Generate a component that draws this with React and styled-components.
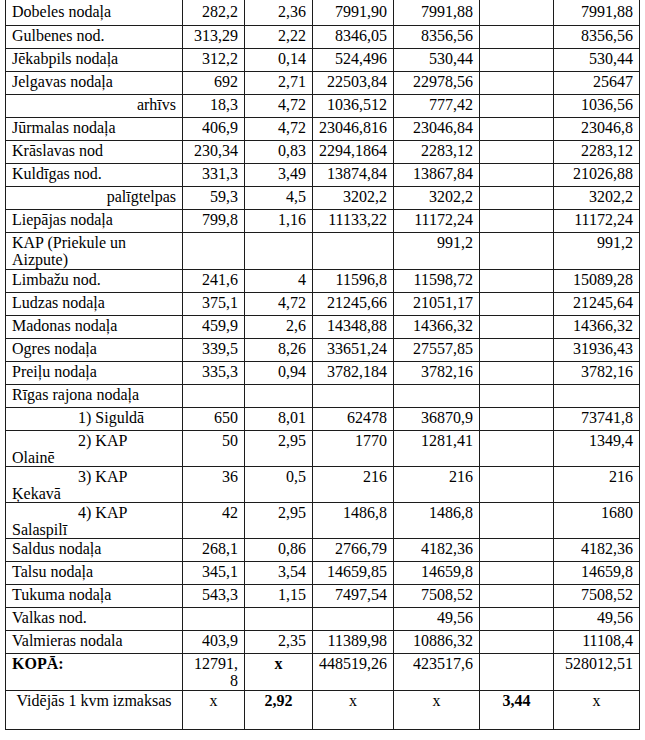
import React from 'react';
import styled, { createGlobalStyle } from 'styled-components';

const GlobalStyle = createGlobalStyle`
  html, body {
    margin: 0;
    padding: 0;
    background: #fff;
  }
`;

const Page = styled.div`
  width: 645px;
  height: 740px;
  overflow: hidden;
  padding-left: 5px;
  box-sizing: border-box;
  background: #fff;
`;

const Sheet = styled.table`
  width: 634px;
  table-layout: fixed;
  border-collapse: collapse;
  font-family: "Liberation Serif", "Times New Roman", serif;
  font-size: 16px;
  line-height: 17px;
  color: #000;
`;

const Col = styled.col`
  width: ${p => p.$w}px;
`;

const Row = styled.tr`
  height: ${p => p.$h || 23}px;
`;

const Cell = styled.td`
  border: 1px solid #1c1c1c;
  border-top: ${p => (p.$first ? 'none' : '1px solid #1c1c1c')};
  padding: ${p => (p.$first ? 3 : 1)}px 6px 0 6px;
  vertical-align: top;
  text-align: ${p => p.$align || 'right'};
  font-weight: ${p => (p.$bold ? 700 : 400)};
  text-indent: ${p => p.$indent || 0}px;
  white-space: nowrap;
  overflow: hidden;
`;

const widths = [177, 62, 68, 81, 86, 74, 86];

const rows = [
  { name: 'Dobeles nodaļa', v: ['282,2', '2,36', '7991,90', '7991,88', '', '7991,88'], h: 25, first: true },
  { name: 'Gulbenes nod.', v: ['313,29', '2,22', '8346,05', '8356,56', '', '8356,56'] },
  { name: 'Jēkabpils nodaļa', v: ['312,2', '0,14', '524,496', '530,44', '', '530,44'] },
  { name: 'Jelgavas nodaļa', v: ['692', '2,71', '22503,84', '22978,56', '', '25647'] },
  { name: 'arhīvs', align: 'right', v: ['18,3', '4,72', '1036,512', '777,42', '', '1036,56'] },
  { name: 'Jūrmalas nodaļa', v: ['406,9', '4,72', '23046,816', '23046,84', '', '23046,8'] },
  { name: 'Krāslavas nod', v: ['230,34', '0,83', '2294,1864', '2283,12', '', '2283,12'] },
  { name: 'Kuldīgas nod.', v: ['331,3', '3,49', '13874,84', '13867,84', '', '21026,88'] },
  { name: 'palīgtelpas', align: 'right', v: ['59,3', '4,5', '3202,2', '3202,2', '', '3202,2'] },
  { name: 'Liepājas nodaļa', v: ['799,8', '1,16', '11133,22', '11172,24', '', '11172,24'] },
  { name: ['KAP (Priekule un', 'Aizpute)'], v: ['', '', '', '991,2', '', '991,2'], h: 37 },
  { name: 'Limbažu nod.', v: ['241,6', '4', '11596,8', '11598,72', '', '15089,28'] },
  { name: 'Ludzas nodaļa', v: ['375,1', '4,72', '21245,66', '21051,17', '', '21245,64'] },
  { name: 'Madonas nodaļa', v: ['459,9', '2,6', '14348,88', '14366,32', '', '14366,32'] },
  { name: 'Ogres nodaļa', v: ['339,5', '8,26', '33651,24', '27557,85', '', '31936,43'] },
  { name: 'Preiļu nodaļa', v: ['335,3', '0,94', '3782,184', '3782,16', '', '3782,16'] },
  { name: 'Rīgas rajona nodaļa', v: ['', '', '', '', '', ''] },
  { name: '1) Siguldā', indent: 66, v: ['650', '8,01', '62478', '36870,9', '', '73741,8'] },
  { name: ['2) KAP', 'Olainē'], indent: 66, v: ['50', '2,95', '1770', '1281,41', '', '1349,4'], h: 36 },
  { name: ['3) KAP', 'Ķekavā'], indent: 66, v: ['36', '0,5', '216', '216', '', '216'], h: 36 },
  { name: ['4) KAP', 'Salaspilī'], indent: 66, v: ['42', '2,95', '1486,8', '1486,8', '', '1680'], h: 36 },
  { name: 'Saldus nodaļa', v: ['268,1', '0,86', '2766,79', '4182,36', '', '4182,36'] },
  { name: 'Talsu nodaļa', v: ['345,1', '3,54', '14659,85', '14659,8', '', '14659,8'] },
  { name: 'Tukuma nodaļa', v: ['543,3', '1,15', '7497,54', '7508,52', '', '7508,52'] },
  { name: 'Valkas nod.', v: ['', '', '', '49,56', '', '49,56'] },
  { name: 'Valmieras nodala', v: ['403,9', '2,35', '11389,98', '10886,32', '', '11108,4'] },
];

const Lines = ({ text }) =>
  Array.isArray(text) ? (
    <>
      {text[0]}
      <br />
      {text[1]}
    </>
  ) : (
    text
  );

export default function App() {
  return (
    <Page>
      <GlobalStyle />
      <Sheet>
        <colgroup>
          {widths.map((w, i) => (
            <Col key={i} $w={w} />
          ))}
        </colgroup>
        <tbody>
          {rows.map((r, i) => (
            <Row key={i} $h={r.h}>
              <Cell $first={r.first} $align={r.align || 'left'} $indent={r.indent}>
                <Lines text={r.name} />
              </Cell>
              {r.v.map((val, j) => (
                <Cell key={j} $first={r.first}>
                  {val}
                </Cell>
              ))}
            </Row>
          ))}
          <Row $h={37}>
            <Cell $align="left" $bold>KOPĀ:</Cell>
            <Cell>
              12791,
              <br />
              8
            </Cell>
            <Cell $align="center" $bold>x</Cell>
            <Cell>448519,26</Cell>
            <Cell>423517,6</Cell>
            <Cell />
            <Cell>528012,51</Cell>
          </Row>
          <Row $h={39}>
            <Cell $align="center">Vidējās 1 kvm izmaksas</Cell>
            <Cell $align="center">x</Cell>
            <Cell $align="center" $bold>2,92</Cell>
            <Cell $align="center">x</Cell>
            <Cell $align="center">x</Cell>
            <Cell $align="center" $bold>3,44</Cell>
            <Cell $align="center">x</Cell>
          </Row>
        </tbody>
      </Sheet>
    </Page>
  );
}
